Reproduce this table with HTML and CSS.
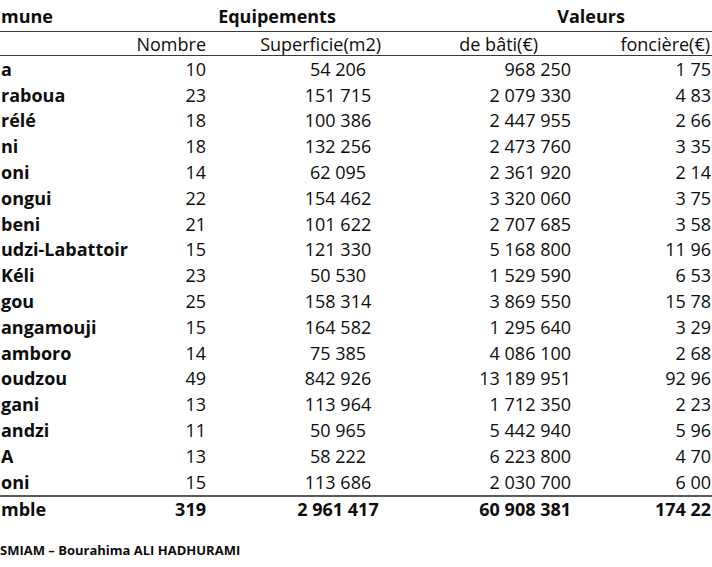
FILE: index.html
```html
<!DOCTYPE html>
<html lang="fr">
<head>
<meta charset="utf-8">
<title>Equipements et valeurs par commune</title>
<link rel="stylesheet" href="styles.css">
</head>
<body>
<div class="sheet">
<table class="data">
  <colgroup>
    <col class="w-name"><col class="w-nb"><col class="w-sup"><col class="w-bati"><col class="w-fon">
  </colgroup>
  <thead>
    <tr class="h1">
      <th class="name">mune</th>
      <th colspan="2" class="grp grp-eq">Equipements</th>
      <th colspan="2" class="grp grp-val">Valeurs</th>
    </tr>
    <tr class="h2">
      <th></th>
      <th class="nb">Nombre</th>
      <th class="sup-h">Superficie(m2)</th>
      <th class="bati-h">de bâti(€)</th>
      <th class="fon-h">foncière(€)</th>
    </tr>
  </thead>
  <tbody>
    <tr><td class="name">a</td><td class="nb">10</td><td class="sup">54 206</td><td class="bati">968 250</td><td class="fon">1 75</td></tr>
    <tr><td class="name">raboua</td><td class="nb">23</td><td class="sup">151 715</td><td class="bati">2 079 330</td><td class="fon">4 83</td></tr>
    <tr><td class="name">rélé</td><td class="nb">18</td><td class="sup">100 386</td><td class="bati">2 447 955</td><td class="fon">2 66</td></tr>
    <tr><td class="name">ni</td><td class="nb">18</td><td class="sup">132 256</td><td class="bati">2 473 760</td><td class="fon">3 35</td></tr>
    <tr><td class="name">oni</td><td class="nb">14</td><td class="sup">62 095</td><td class="bati">2 361 920</td><td class="fon">2 14</td></tr>
    <tr><td class="name">ongui</td><td class="nb">22</td><td class="sup">154 462</td><td class="bati">3 320 060</td><td class="fon">3 75</td></tr>
    <tr><td class="name">beni</td><td class="nb">21</td><td class="sup">101 622</td><td class="bati">2 707 685</td><td class="fon">3 58</td></tr>
    <tr><td class="name">udzi-Labattoir</td><td class="nb">15</td><td class="sup">121 330</td><td class="bati">5 168 800</td><td class="fon">11 96</td></tr>
    <tr><td class="name">Kéli</td><td class="nb">23</td><td class="sup">50 530</td><td class="bati">1 529 590</td><td class="fon">6 53</td></tr>
    <tr><td class="name">gou</td><td class="nb">25</td><td class="sup">158 314</td><td class="bati">3 869 550</td><td class="fon">15 78</td></tr>
    <tr><td class="name">angamouji</td><td class="nb">15</td><td class="sup">164 582</td><td class="bati">1 295 640</td><td class="fon">3 29</td></tr>
    <tr><td class="name">amboro</td><td class="nb">14</td><td class="sup">75 385</td><td class="bati">4 086 100</td><td class="fon">2 68</td></tr>
    <tr><td class="name">oudzou</td><td class="nb">49</td><td class="sup">842 926</td><td class="bati">13 189 951</td><td class="fon">92 96</td></tr>
    <tr><td class="name">gani</td><td class="nb">13</td><td class="sup">113 964</td><td class="bati">1 712 350</td><td class="fon">2 23</td></tr>
    <tr><td class="name">andzi</td><td class="nb">11</td><td class="sup">50 965</td><td class="bati">5 442 940</td><td class="fon">5 96</td></tr>
    <tr><td class="name">A</td><td class="nb">13</td><td class="sup">58 222</td><td class="bati">6 223 800</td><td class="fon">4 70</td></tr>
    <tr class="last"><td class="name">oni</td><td class="nb">15</td><td class="sup">113 686</td><td class="bati">2 030 700</td><td class="fon">6 00</td></tr>
  </tbody>
  <tfoot>
    <tr class="total"><td class="name">mble</td><td class="nb">319</td><td class="sup">2 961 417</td><td class="bati">60 908 381</td><td class="fon">174 22</td></tr>
  </tfoot>
</table>
<p class="source">SMIAM – Bourahima ALI HADHURAMI</p>
</div>
</body>
</html>
```

FILE: styles.css
```css
html, body {
  margin: 0;
  padding: 0;
  background: #ffffff;
}
body {
  font-family: "Open Sans", "Liberation Sans", sans-serif;
  color: #0d0d0d;
}
.sheet {
  width: 712px;
  height: 567px;
  overflow: hidden;
}
.data {
  width: 712px;
  table-layout: fixed;
  border-collapse: collapse;
  font-size: 18px;
  line-height: 22px;
}
.w-name { width: 120px; }
.w-nb { width: 96px; }
.w-sup { width: 174px; }
.w-bati { width: 190px; }
.w-fon { width: 132px; }

.data th, .data td {
  padding: 0;
  white-space: nowrap;
}
.data th { font-weight: 400; }

.h1 th {
  height: 27px;
  vertical-align: bottom;
  padding-bottom: 4px;
  font-weight: 700;
  border-bottom: 1px solid #3a3a3a;
}
.h1 .name { text-align: left; }
.grp { text-align: center; }
.grp-eq { padding-left: 44px !important; }
.grp-val { padding-left: 80px !important; }

.h2 th {
  height: 23px;
  vertical-align: middle;
  border-bottom: 1px solid #3a3a3a;
}

.data tbody td,
.data tfoot td {
  height: 25.8px;
  vertical-align: middle;
}
.name {
  text-align: left;
  font-weight: 700;
  padding-left: 1px !important;
  overflow: visible;
}
.nb { text-align: right; padding-right: 10px !important; }
.sup { text-align: center; padding-left: 70px !important; }
.sup-h { text-align: right; padding-right: 9px !important; }
.bati { text-align: right; padding-right: 9px !important; }
.bati-h { text-align: right; padding-right: 42px !important; }
.fon { text-align: right; padding-right: 1px !important; }
.fon-h { text-align: right; padding-right: 2px !important; }

.last td { border-bottom: 2px solid #5a5a5a; }
.total td {
  border-top: 1px solid #c8c8c8;
  font-weight: 700;
}

.source {
  margin: 19px 0 0;
  font-size: 13px;
  line-height: 18px;
  font-weight: 700;
}
```
